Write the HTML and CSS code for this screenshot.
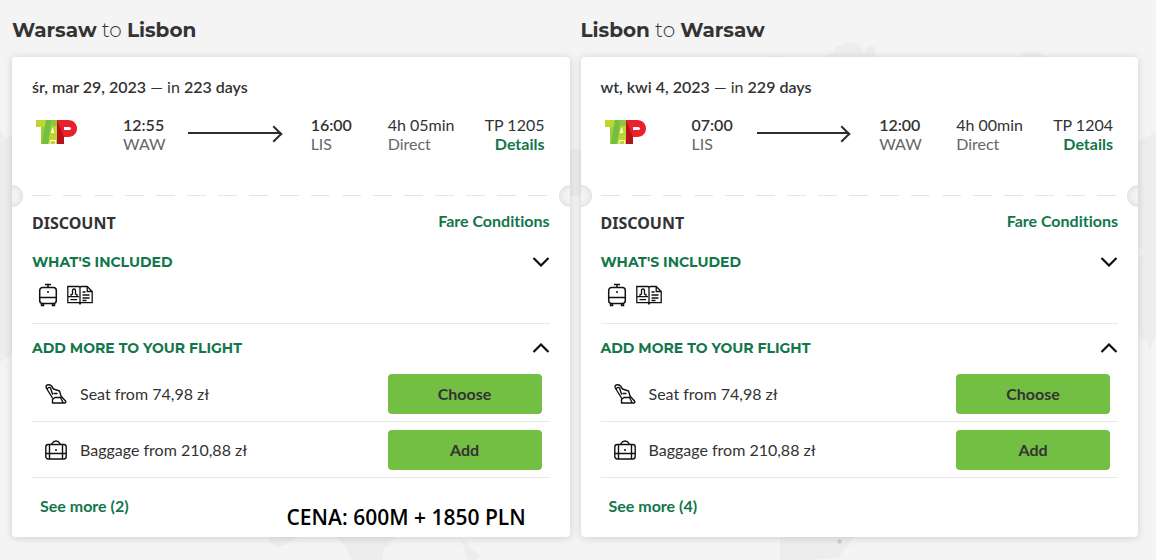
FILE: index.html
```html
<!DOCTYPE html>
<html lang="en">
<head>
<meta charset="utf-8">
<meta name="viewport" content="width=device-width, initial-scale=1">
<title>Warsaw to Lisbon</title>
<link rel="stylesheet" href="styles.css">
</head>
<body>
<svg width="0" height="0" class="sprite" aria-hidden="true">
  <symbol id="tap" viewBox="0 0 42 24">
    <path fill="#bed630" d="M0 0h22v24H5V7H0z"/>
    <path fill="#72bf44" d="M10 0h6l-4 24H5z"/>
    <path fill="#a1cc3a" d="M5 7h3L6 24H5z"/>
    <path fill="#8fc63f" d="M15 0h6v6h-7z"/>
    <path fill="#fff" d="M13.500 24l.7-4H20v4h-.8v-3h-4.400l-.5 3zM15 13l1.200-5h.8l1.200 5z"/>
    <path fill="#e8212b" d="M21 0h11c12 0 12 17 0 17h-4v7h-7z"/>
    <path fill="#b5121b" d="M21 0l7 17v7h-7z"/>
    <path fill="#fff" d="M28 7h5q2 0 2 1.500T33 10h-5z"/>
  </symbol>
  <symbol id="cabin" viewBox="0 0 20 24">
    <g fill="none" stroke="#111" stroke-width="1.500"><path d="M7 1.500h6M10 1.500V4M1.700 14.500h16.600"/><rect x="1.700" y="4.500" width="16.600" height="16" rx="3"/><path d="M3.500 21v1.500h2V21M14.500 21v1.500h2V21"/></g>
    <circle cx="10" cy="9" r="1" fill="#111"/>
  </symbol>
  <symbol id="booklet" viewBox="0 0 26 20">
    <g fill="none" stroke="#111" stroke-width="1.300"><path d="M13 2.500L12 1.500H.8v16.200H12l1 1.300 1-1.300h11.200V6.500l-5-5H14zM13 2v16M20.200 1.500v5h5M15.500 7h3M15.500 10h7M15.500 13h7M15.500 15.500h4M.8 11.700H12M3.500 14.700h6.500"/><path d="M4 11.500V9.600L5.500 9V5.700Q5.500 4 7 4t1.500 1.700V9l1.500.6v1.900"/></g>
  </symbol>
  <symbol id="seat" viewBox="0 0 22 20">
    <g fill="none" stroke="#111" stroke-width="1.400" stroke-linejoin="round" stroke-linecap="round"><path d="M7.500 14L1.300 4Q.5 1 3 .8q2-.2 3.500 1.200L8.500 5l6 2 1.500 5 4.500 5q1 2-1 2h-12v-3.500l2.500-2h5.500l2.500 5M2.500 4.500Q4 2.500 5.500 4l2 6M9 9.500h3"/></g>
  </symbol>
  <symbol id="bag" viewBox="0 0 22 20">
    <g fill="none" stroke="#111" stroke-width="1.400"><rect x=".8" y="4.500" width="20.400" height="14.500" rx="2.500"/><path d="M7 4.500V3.500Q8.500 1 11 1t4 2.500v1M4.500 4.500V19M17.500 4.500V19M.8 13.500h20.400"/></g>
    <circle cx="11" cy="10" r="1" fill="#111"/>
  </symbol>
  <symbol id="chev" viewBox="0 0 18 10"><path d="M1.500 1L9 8.500 16.500 1" fill="none" stroke="#111" stroke-width="2.200"/></symbol>
</svg>
<svg class="map" viewBox="0 0 1156 560" preserveAspectRatio="xMidYMid slice" aria-hidden="true">
  <path d="M0 130l5 8 7-2 40 40v120l-35 60-10 2-7 4zM568 149h14v47h-14zM822 57l12-5 2-5 12-5 12 3 4 8 4-8 7 2 1 10zM1020 57l4-4 12-1 12 5zM765 57q10-3 22 0zM1130 140l10 1 16-9v258l-7-14 7-14v-27l-16 42-10 10zM268 537h32l-14 7-9 3-7-4zM336 537h60l-12 12-2 11h-30l-7-14zM460 537l12 12 8 6-4 5h-8zM780 537h75l-10 12-7 9-28 2h-30z"/>
  <path class="land-light" d="M1138 333l9 9 6 22h3v34l-18 10zM1138 248q7-2 6 6l-6 3z"/>
  <circle cx="839.500" cy="541.500" r="2.200"/>
</svg>
<main class="trips">
  <section class="trip">
    <h2 class="route"><b>Warsaw</b> to <b>Lisbon</b></h2>
    <article class="card">
      <p class="date"><b>śr, mar 29, 2023</b> — in <b>223 days</b></p>
      <div class="flight">
        <svg class="logo" role="img" aria-label="TAP"><use href="#tap"/></svg>
        <div class="stop"><b>12:55</b><span>WAW</span></div>
        <div class="arrow"></div>
        <div class="stop"><b>16:00</b><span>LIS</span></div>
        <div class="stop">4h 05min<span>Direct</span></div>
        <div class="stop number">TP 1205<a href="#">Details</a></div>
      </div>
      <div class="tear"></div>
      <div class="line fare"><h3>DISCOUNT</h3><a href="#">Fare Conditions</a></div>
      <button class="line toggle" type="button">WHAT'S INCLUDED<svg><use href="#chev"/></svg></button>
      <div class="included"><svg class="cabin"><use href="#cabin"/></svg><svg class="booklet"><use href="#booklet"/></svg></div>
      <button class="line toggle open" type="button">ADD MORE TO YOUR FLIGHT<svg><use href="#chev"/></svg></button>
      <ul class="extras">
        <li><svg><use href="#seat"/></svg><span>Seat from 74,98 zł</span><button type="button">Choose</button></li>
        <li><svg><use href="#bag"/></svg><span>Baggage from 210,88 zł</span><button type="button">Add</button></li>
      </ul>
      <div class="foot"><a href="#">See more (2)</a><strong class="price">CENA: 600M + 1850 PLN</strong></div>
    </article>
  </section>
  <section class="trip">
    <h2 class="route"><b>Lisbon</b> to <b>Warsaw</b></h2>
    <article class="card">
      <p class="date"><b>wt, kwi 4, 2023</b> — in <b>229 days</b></p>
      <div class="flight">
        <svg class="logo" role="img" aria-label="TAP"><use href="#tap"/></svg>
        <div class="stop"><b>07:00</b><span>LIS</span></div>
        <div class="arrow"></div>
        <div class="stop"><b>12:00</b><span>WAW</span></div>
        <div class="stop">4h 00min<span>Direct</span></div>
        <div class="stop number">TP 1204<a href="#">Details</a></div>
      </div>
      <div class="tear"></div>
      <div class="line fare"><h3>DISCOUNT</h3><a href="#">Fare Conditions</a></div>
      <button class="line toggle" type="button">WHAT'S INCLUDED<svg><use href="#chev"/></svg></button>
      <div class="included"><svg class="cabin"><use href="#cabin"/></svg><svg class="booklet"><use href="#booklet"/></svg></div>
      <button class="line toggle open" type="button">ADD MORE TO YOUR FLIGHT<svg><use href="#chev"/></svg></button>
      <ul class="extras">
        <li><svg><use href="#seat"/></svg><span>Seat from 74,98 zł</span><button type="button">Choose</button></li>
        <li><svg><use href="#bag"/></svg><span>Baggage from 210,88 zł</span><button type="button">Add</button></li>
      </ul>
      <div class="foot"><a href="#">See more (4)</a></div>
    </article>
  </section>
</main>
</body>
</html>
```
FILE: styles.css
```css
* { box-sizing: border-box; }
body {
  margin: 0;
  background: #f4f4f4;
  color: #333;
  font: 16px/20px Lato, "Liberation Sans", sans-serif;
  font-variant-ligatures: none;
}
h2, h3, p, ul { margin: 0; padding: 0; }
b { font-weight: 600; }
a { color: #12764a; font-weight: 700; text-decoration: none; }
button { border: 0; padding: 0; font: inherit; cursor: pointer; }
.sprite { position: absolute; }
.map { position: absolute; inset: 0; width: 100%; height: 100%; z-index: -1; fill: #ededed; }
.map circle { fill: #ccc; }
.map .land-light { fill: #f4f4f4; }
.trips {
  display: grid;
  grid-template-columns: 1fr 1fr;
  gap: 11px;
  padding: 18px 18px 23px 12px;
}
.trip { display: flex; flex-direction: column; }
.route {
  margin-bottom: 15px;
  font: 300 20px/24px Montserrat, Inter, sans-serif;
}
.route b { font-weight: 700; }
.card {
  position: relative;
  flex: 1;
  overflow: hidden;
  padding: 20px 20px 8px;
  border-radius: 4px;
  background: #fff;
  box-shadow: 0 1px 8px rgba(0, 0, 0, .15);
}
.date { margin-bottom: 18px; }
.flight {
  display: grid;
  grid-template-columns: 87px 65px 1fr 77px 97px auto;
  padding: 0 5px 0 4px;
  line-height: 19px;
}
.logo { width: 42px; height: 24px; margin-top: 5px; }
.stop > * { display: block; }
.stop span { color: #666; }
.number { text-align: right; }
.arrow {
  position: relative;
  height: 2px;
  margin: 17px 30px 0 0;
  background: #2d2d2d;
}
.arrow::after {
  content: "";
  position: absolute;
  right: 1px;
  top: -4px;
  width: 10px;
  height: 10px;
  border: solid #2d2d2d;
  border-width: 2px 2px 0 0;
  transform: rotate(45deg);
}
.tear {
  position: relative;
  height: 1px;
  margin: 42px 0 15px;
  background: repeating-linear-gradient(90deg, #e4e4e4 0 19px, transparent 19px 31px);
}
.tear::before, .tear::after {
  content: "";
  position: absolute;
  top: -10px;
  width: 22px;
  height: 22px;
  border-radius: 50%;
  background: #f3f3f3;
  box-shadow: inset 0 0 6px rgba(0, 0, 0, .12);
}
.tear::before { left: -31px; }
.tear::after { right: -31px; }
.line { display: flex; align-items: center; justify-content: space-between; width: 100%; }
.fare { align-items: flex-start; margin-bottom: 17px; }
.fare h3 { font: 700 16px/24px "Noto Sans", sans-serif; }
.toggle {
  background: none;
  color: #12764a;
  font: 700 14px/20px Montserrat, Inter, sans-serif;
}
.toggle svg { width: 18px; height: 10px; }
.open svg { transform: rotate(180deg); }
.included {
  display: flex;
  align-items: center;
  gap: 9px;
  margin-bottom: 14px;
  padding: 11px 0 16px 6px;
  border-bottom: 1px solid #e8e8e8;
}
.cabin { width: 20px; height: 24px; }
.booklet { width: 26px; height: 20px; }
.extras { margin-top: 8px; list-style: none; }
.extras li {
  display: flex;
  align-items: center;
  height: 56px;
  padding: 0 8px 0 13px;
  border-bottom: 1px solid #e8e8e8;
}
.extras svg { width: 22px; height: 20px; margin-right: 13px; }
.extras span { flex: 1; }
.extras button {
  width: 154px;
  height: 40px;
  border-radius: 4px;
  background: #72bf44;
  color: #333;
  font-weight: 700;
}
.foot { display: flex; gap: 158px; padding: 18px 8px 0; }
.price { margin-top: 9px; color: #000; font: 600 21px/24px "Open Sans", sans-serif; }
```
